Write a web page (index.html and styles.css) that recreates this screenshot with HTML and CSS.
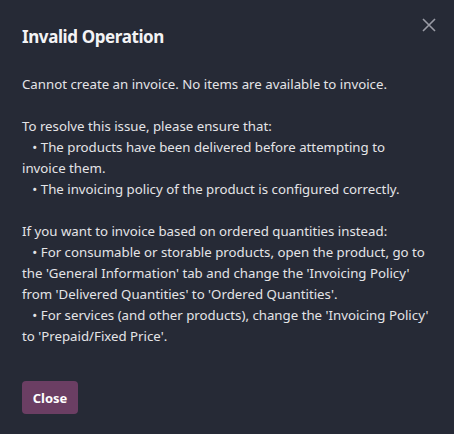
FILE: index.html
```html
<!DOCTYPE html>
<html lang="en">
<head>
<meta charset="utf-8">
<title>Invalid Operation</title>
<link rel="stylesheet" href="styles.css">
</head>
<body>
<div class="modal">
  <header class="modal-header">
    <h4 class="modal-title">Invalid Operation</h4>
    <button class="btn-close" type="button" aria-label="Close">
      <svg width="14" height="14" viewBox="0 0 14 14"><path d="M1 1 L13 13 M13 1 L1 13" stroke="currentColor" stroke-width="1.6" fill="none"/></svg>
    </button>
  </header>
  <main class="modal-body"><p class="message">Cannot create an invoice. No items are available to invoice.

To resolve this issue, please ensure that:
   • The products have been delivered before attempting to invoice them.
   • The invoicing policy of the product is configured correctly.

If you want to invoice based on ordered quantities instead:
   • For consumable or storable products, open the product, go to the 'General Information' tab and change the 'Invoicing Policy' from 'Delivered Quantities' to 'Ordered Quantities'.
   • For services (and other products), change the 'Invoicing Policy' to 'Prepaid/Fixed Price'.</p></main>
  <footer class="modal-footer">
    <button class="btn-primary" type="button">Close</button>
  </footer>
</div>
</body>
</html>
```
FILE: styles.css
```css
html, body {
  margin: 0;
  padding: 0;
  background: #262a36;
}
body {
  font-family: "Noto Sans", "Open Sans", sans-serif;
  color: #e4e4e7;
  font-size: 13.25px;
}
.modal {
  width: 454px;
  height: 434px;
  box-sizing: border-box;
  display: flex;
  flex-direction: column;
}
.modal-header {
  display: flex;
  align-items: flex-start;
  justify-content: space-between;
  padding: 25px 18px 0 22px;
}
.modal-title {
  margin: 0;
  font-size: 17px;
  letter-spacing: -0.4px;
  font-weight: 700;
  line-height: 24px;
  color: #f3f3f5;
}
.btn-close {
  margin-top: -7px;
  border: 0;
  background: none;
  padding: 0;
  width: 14px;
  height: 14px;
  color: #9a9ca6;
  cursor: pointer;
}
.btn-close svg { display: block; }
.modal-body {
  padding: 25px 23px 0 22px;
}
.message {
  margin: 0;
  white-space: pre-wrap;
  line-height: 21px;
}
.modal-footer {
  padding: 34px 22px 0 22px;
}
.btn-primary {
  font-family: inherit;
  font-size: 13px;
  font-weight: 700;
  color: #ffffff;
  background: #6b3e63;
  border: 0;
  border-radius: 4px;
  width: 56px;
  height: 33px;
  padding: 0;
}
```
